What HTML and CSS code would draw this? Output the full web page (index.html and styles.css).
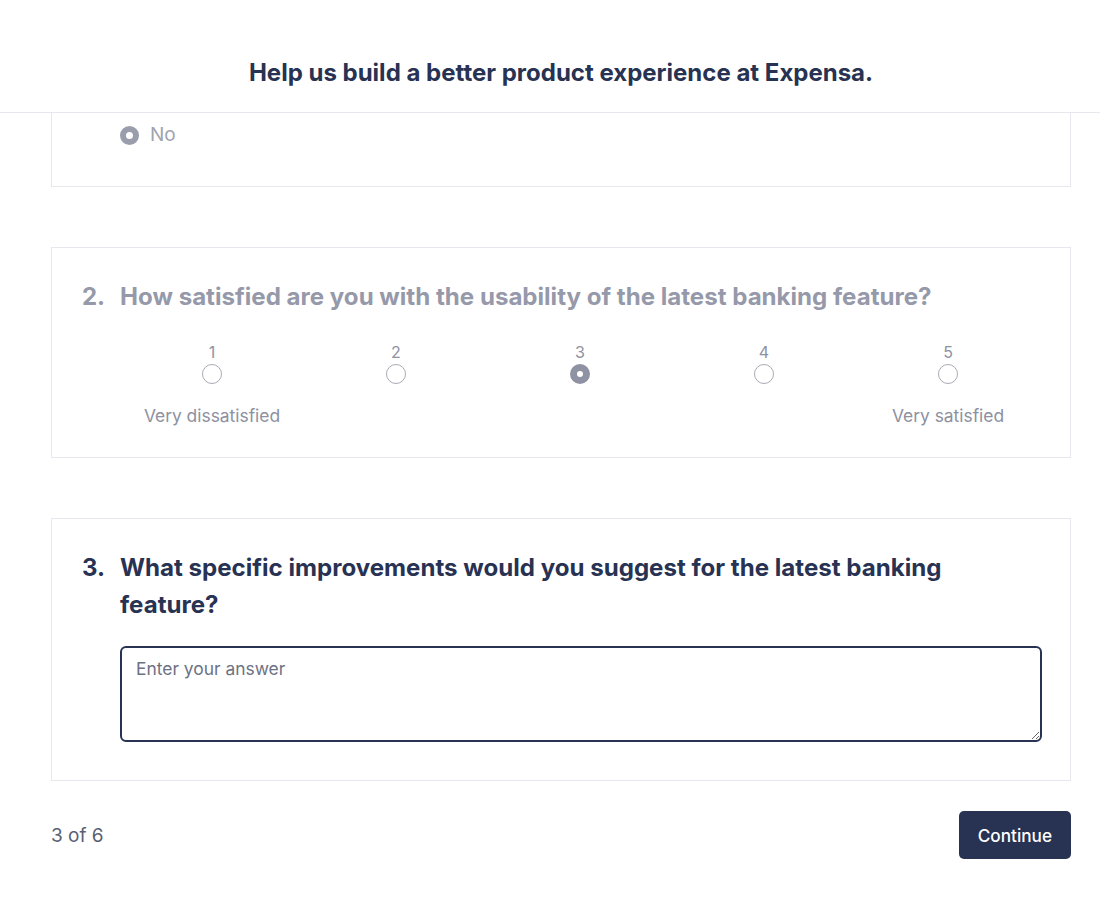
FILE: index.html
```html
<!DOCTYPE html>
<html lang="en">
<head>
<meta charset="utf-8">
<title>Expensa survey</title>
<link rel="stylesheet" href="styles.css">
</head>
<body>
<header class="top">
  <div class="wrap">
    <h1 class="title">Help us build a better product experience at Expensa.</h1>
  </div>
</header>
<main class="wrap">
  <section class="card card-cut faded">
    <div class="q-body">
      <label class="option">
        <span class="radio radio-on"></span>
        <span class="option-text">No</span>
      </label>
    </div>
  </section>

  <section class="card faded">
    <div class="q-head">
      <span class="q-num">2.</span>
      <h2 class="q-text">How satisfied are you with the usability of the latest banking feature?</h2>
    </div>
    <div class="q-body">
      <div class="scale">
        <div class="scale-item"><span class="scale-num">1</span><span class="radio"></span></div>
        <div class="scale-item"><span class="scale-num">2</span><span class="radio"></span></div>
        <div class="scale-item"><span class="scale-num">3</span><span class="radio radio-on"></span></div>
        <div class="scale-item"><span class="scale-num">4</span><span class="radio"></span></div>
        <div class="scale-item"><span class="scale-num">5</span><span class="radio"></span></div>
      </div>
      <div class="scale-labels">
        <span class="scale-label">Very dissatisfied</span>
        <span class="scale-label">Very satisfied</span>
      </div>
    </div>
  </section>

  <section class="card card-active">
    <div class="q-head">
      <span class="q-num">3.</span>
      <h2 class="q-text">What specific improvements would you suggest for the latest banking feature?</h2>
    </div>
    <div class="q-body">
      <textarea class="answer" placeholder="Enter your answer" autofocus></textarea>
    </div>
  </section>

  <footer class="footer">
    <span class="progress">3 of 6</span>
    <button class="btn" type="button">Continue</button>
  </footer>
</main>
</body>
</html>
```
FILE: styles.css
```css
* { box-sizing: border-box; }
html, body { margin: 0; padding: 0; background: #ffffff; }
body {
  font-family: Inter, "Noto Sans", "Liberation Sans", sans-serif;
  color: #283252;
  height: 904px;
  overflow: hidden;
}
.wrap {
  width: 1020px;
  margin-left: 51px;
}
.top {
  height: 113px;
  border-bottom: 1px solid #e7e8ee;
  background: #fff;
  padding-top: 57px;
}
.title {
  margin: 0;
  text-align: center;
  font-size: 24px;
  font-weight: 700;
  line-height: 32px;
  color: #283252;
}
.card {
  border: 1px solid #e7e8ee;
  padding: 30px 30px 29px 30px;
  margin-bottom: 60px;
  background: #fff;
}
.card-cut {
  border-top: none;
  padding-top: 11px;
  padding-bottom: 40px;
}
.q-head {
  display: flex;
  align-items: flex-start;
}
.q-num {
  width: 38px;
  flex: none;
  font-size: 24px;
  font-weight: 700;
  line-height: 37px;
}
.q-text {
  margin: 0;
  font-size: 24.1px;
  font-weight: 700;
  line-height: 37px;
  flex: 1;
}
.q-body {
  margin-left: 38px;
}
.faded .q-num, .faded .q-text { color: #9699aa; }

.option {
  display: flex;
  align-items: center;
  gap: 11px;
  height: 22px;
}
.option-text {
  font-size: 19px;
  color: #a0a3b1;
  line-height: 22px;
}
.radio {
  width: 20px;
  height: 20px;
  border-radius: 50%;
  border: 1px solid #a9abb4;
  background: #fff;
  display: inline-block;
  flex: none;
}
.radio-on {
  border: 7px solid #8e92a2;
  background: #fff;
}
.card-cut .radio { width: 19px; height: 19px; border-width: 6.5px; border-color: #9a9dab; }

.scale {
  display: grid;
  grid-template-columns: repeat(5, 1fr);
  margin-top: 27px;
}
.scale-item {
  display: flex;
  flex-direction: column;
  align-items: center;
  gap: 2px;
}
.scale-num {
  font-size: 16px;
  line-height: 20px;
  color: #8d91a1;
}
.scale-labels {
  display: grid;
  grid-template-columns: repeat(5, 1fr);
  margin-top: 20px;
}
.scale-label {
  font-size: 17.4px;
  line-height: 24px;
  color: #8d91a1;
  text-align: center;
}
.scale-label:last-child { grid-column: 5; }

.card-active { padding-bottom: 38px; }
.answer {
  display: block;
  width: 922px;
  height: 96px;
  margin-top: 23px;
  border: 2px solid #283252;
  border-radius: 6px;
  padding: 9px 14px;
  font-family: Inter, "Noto Sans", "Liberation Sans", sans-serif;
  font-size: 17.4px;
  line-height: 24px;
  color: #283252;
  outline: none;
  resize: vertical;
}
.answer::placeholder { color: #6d7283; }

.footer {
  display: flex;
  justify-content: space-between;
  align-items: center;
  margin-top: -30px;
}
.progress {
  font-size: 19px;
  color: #585f73;
}
.btn {
  height: 48px;
  padding: 0 19px;
  border: none;
  border-radius: 5px;
  background: #283252;
  color: #fff;
  font-family: Inter, "Noto Sans", "Liberation Sans", sans-serif;
  font-size: 17.2px;
  font-weight: 500;
  cursor: pointer;
}
```
